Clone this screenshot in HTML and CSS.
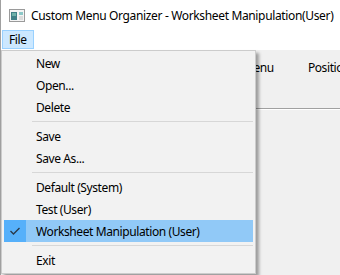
FILE: index.html
```html
<!DOCTYPE html>
<html lang="en">
<head>
    <meta charset="UTF-8">
    <title>Custom Menu Organizer</title>
    <link rel="stylesheet" href="styles.css">
</head>
<body>
    <div class="titlebar">
        <svg class="app-icon" width="16" height="13" viewBox="0 0 16 13">
            <rect x="0.5" y="0.5" width="15" height="12" fill="#f4f4f4" stroke="#9a9a9a"/>
            <rect x="2" y="3" width="6" height="8" fill="#3f7f86"/>
            <rect x="3" y="4" width="4" height="3" fill="#6db0a8"/>
            <rect x="10" y="3" width="4" height="3" fill="#8cc8c8"/>
            <rect x="10" y="7" width="4" height="4" fill="#dcdcdc"/>
        </svg>
        <span class="title">Custom Menu Organizer - Worksheet Manipulation(User)</span>
    </div>
    <div class="menubar">
        <div class="menubar-item active">File</div>
    </div>
    <div class="main">
        <div class="columns">
            <span class="col-menu">Menu</span>
            <span class="col-pos">Position</span>
        </div>
        <div class="grid-line"></div>
    </div>

    <div class="dropdown">
        <div class="item">New</div>
        <div class="item">Open...</div>
        <div class="item">Delete</div>
        <div class="sep"></div>
        <div class="item">Save</div>
        <div class="item">Save As...</div>
        <div class="sep"></div>
        <div class="item">Default (System)</div>
        <div class="item">Test (User)</div>
        <div class="item checked">
            <span class="check">
                <svg width="12" height="10" viewBox="0 0 12 10">
                    <polyline points="1.5,5 4.5,8 10.5,2" fill="none" stroke="#2b3a4a" stroke-width="1.4"/>
                </svg>
            </span>
            Worksheet Manipulation (User)
        </div>
        <div class="sep"></div>
        <div class="item">Exit</div>
    </div>
</body>
</html>
```

FILE: styles.css
```css
body {
    margin: 0;
    background-color: #f0f0f0;
    font-family: "Noto Sans", "Open Sans", sans-serif;
    font-size: 12px;
    letter-spacing: -0.4px;
    color: #000;
    height: 275px;
    overflow: hidden;
    position: relative;
    border-left: 1px solid #a0a0a0;
}
.titlebar {
    height: 30px;
    background-color: #fff;
    display: flex;
    align-items: center;
    padding-left: 8px;
}
.app-icon {
    flex-shrink: 0;
    margin-right: 6px;
    margin-top: 1px;
}
.title {
    white-space: nowrap;
    margin-top: 1px;
    letter-spacing: -0.35px;
}
.menubar {
    height: 20px;
    background-color: #fff;
    display: flex;
    align-items: stretch;
    padding-left: 1px;
    box-sizing: border-box;
    padding-bottom: 1px;
}
.menubar-item {
    padding: 0 6px;
    display: flex;
    align-items: center;
    border: 1px solid transparent;
}
.menubar-item.active {
    background-color: #cce8ff;
    border-color: #99d1ff;
}
.main {
    padding-top: 8px;
    overflow: hidden;
}
.columns {
    height: 18px;
    display: flex;
    align-items: center;
    padding-left: 242px;
    white-space: nowrap;
}
.col-pos {
    margin-left: 34px;
}
.grid-line {
    margin-top: 32px;
    height: 1px;
    background-color: #a0a0a0;
    border-bottom: 1px solid #fff;
}
.dropdown {
    position: absolute;
    left: 0;
    top: 50px;
    width: 249px;
    padding: 1px 2px 2px;
    background-color: #f2f2f2;
    border: 1px solid #cccccc;
    box-shadow: 3px 3px 3px rgba(0, 0, 0, 0.35);
}
.item {
    height: 22px;
    display: flex;
    align-items: center;
    padding-left: 32px;
    position: relative;
    white-space: nowrap;
}
.item.checked {
    background-color: #91c9f7;
}
.check {
    position: absolute;
    left: 0;
    top: 0;
    width: 22px;
    height: 22px;
    background-color: #56b0fa;
    display: flex;
    align-items: center;
    justify-content: center;
}
.sep {
    height: 1px;
    background-color: #d7d7d7;
    margin: 3px 0 3px 28px;
}
```
